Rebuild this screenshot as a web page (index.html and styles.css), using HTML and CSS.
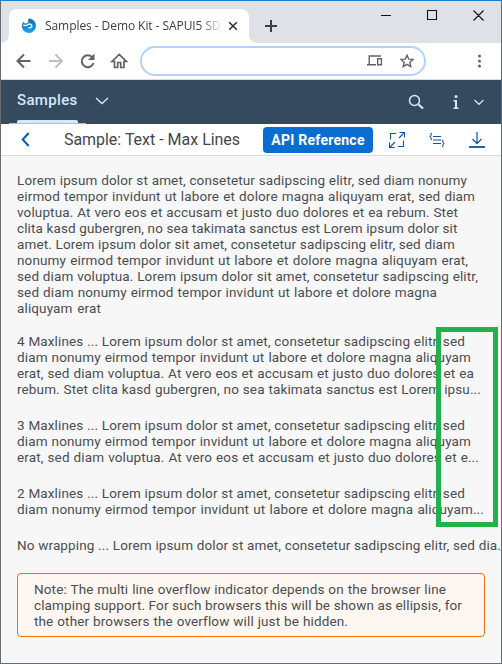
FILE: index.html
```html
<!DOCTYPE html>
<html lang="en">
<head>
<meta charset="utf-8">
<title>Samples - Demo Kit - SAPUI5 SDK</title>
<link rel="stylesheet" href="styles.css">
</head>
<body>
<div class="window">
  <div class="tabstrip">
    <div class="tab">
      <svg class="favicon" width="16" height="16" viewBox="0 0 16 16"><defs><linearGradient id="g" x2="0" y2="1"><stop stop-color="#0a6cb4"/><stop offset="1" stop-color="#1ca4ee"/></linearGradient></defs><path d="M8 .5C10 .7 12.500 1.700 14 4 16.300 8.500 14.300 13.200 10 14.700 5.500 16 1 12.800.9 8.500.8 6.500 1.500 4.700 3 3.500 2.900 4.500 3.500 5.500 4.800 5.500 6.300 5.300 7.500 4.500 7.300 3.300 7.100 2.300 6.900 1.200 8 .5Z" fill="url(#g)"/><path d="M2.300 7C4 8.300 5.500 7.500 7 6.500 8.800 5.500 10.800 6.200 10.800 8 10.600 9.800 8.800 10 7.500 9.500" fill="none" stroke="#e4f4ff" stroke-width="1.500"/></svg>
      <span class="tab-title">Samples - Demo Kit - SAPUI5 SD</span>
      <svg class="tab-close" width="10" height="10" viewBox="0 0 10 10"><path d="M1.200 1.200 8.800 8.800M8.800 1.200 1.200 8.800" stroke="#303438" stroke-width="1.600"/></svg>
    </div>
    <svg class="new-tab" width="12" height="12" viewBox="0 0 12 12"><path d="M6 0v12M0 6h12" stroke="#3c4043" stroke-width="2"/></svg>
    <svg class="controls" width="104" height="12" viewBox="0 0 104 12"><path d="M0 6.500h10M46.500 1.500h9v9h-9zM92.500 1.500l10 10M102.500 1.500l-10 10" fill="none" stroke="#111" stroke-width="1.100"/></svg>
  </div>
  <div class="toolbar">
    <svg class="nav" width="112" height="18" viewBox="0 0 112 18" fill="none" stroke="#5f6368" stroke-width="2"><path d="M14.500 9H2M8 2.500 1.500 9 8 15.500"/><path d="M33 9h12.500M39.500 2.500 46 9l-6.500 6.500" stroke="#bcbec1"/><path d="M76.500 5.500A6 6 0 1 0 77.500 11"/><path d="M78.500 1.500v6.500h-6.500z" fill="#5f6368" stroke="none"/><path d="M96 9.500h2.500V15.500h3.200v-5h3v5h3.200V9.500h2.500L103.200 2.500z" stroke-width="1.700"/></svg>
    <div class="address">
      <svg width="16" height="12" viewBox="0 0 16 12" fill="none" stroke="#5f6368" stroke-width="1.400"><path d="M14 1H2.200v8M0 9.700h9M10.700 3.700h3.700v6h-3.700z"/></svg>
      <svg width="14" height="14" viewBox="0 0 14 14" fill="none" stroke="#5f6368" stroke-width="1.400"><path d="m7 1.200 1.700 3.900 4.300.3-3.200 2.900 1 4.300L7 10.400l-3.800 2.200 1-4.300L1 5.400l4.300-.3z"/></svg>
    </div>
    <svg class="dots" width="4" height="14" viewBox="0 0 4 14" fill="#5f6368"><circle cx="2.500" cy="2" r="1.500"/><circle cx="2.500" cy="7" r="1.500"/><circle cx="2.500" cy="12" r="1.500"/></svg>
  </div>
  <header class="shell">
    <div class="shell-tab"><span class="shell-label">Samples</span>
      <svg width="14" height="8" viewBox="0 0 14 8"><path d="m1 1 6 5.500L13 1" fill="none" stroke="#d1e8ff" stroke-width="1.400"/></svg></div>
    <div class="shell-actions">
      <svg width="16" height="16" viewBox="0 0 16 16" fill="none" stroke="#d1e8ff"><circle cx="6.500" cy="6.500" r="5" stroke-width="1.500"/><path d="m10.500 10.500 4.500 4" stroke-width="2.200"/></svg>
      <svg class="info" width="6" height="14" viewBox="0 0 6 14" fill="#d1e8ff"><circle cx="3" cy="1.600" r="1.500"/><path d="M.5 5H4v7.500h1.500V14h-5v-1.500H2v-6H.5z"/></svg>
      <svg class="more" width="12" height="7" viewBox="0 0 12 7"><path d="m1.500 1 4.500 4.300L10.500 1" fill="none" stroke="#d1e8ff" stroke-width="1.200"/></svg>
    </div>
  </header>
  <div class="page-header">
    <svg width="9" height="15" viewBox="0 0 9 15"><path d="M7.700 1 1.700 7.500 7.700 14" fill="none" stroke="#0a5da8" stroke-width="2"/></svg>
    <h1>Sample: Text - Max Lines</h1>
    <button>API Reference</button>
    <svg class="full" width="16" height="16" viewBox="0 0 16 16" fill="none" stroke="#0854a0" stroke-width="1.100"><path d="M7 1.500H1.500v6M9 14.500h5.500v-6M10.500.5h5v5M.5 10.500v5h5M15.500.5 10 6M.5 15.500 6 10"/></svg>
    <svg class="code" width="16" height="14" viewBox="0 0 16 14" fill="none" stroke="#0854a0"><path d="M4 3.500h8M4 7h8M4 10.500h8" stroke-width="1.200"/><path d="M3 .5H2v2.300L.7 3.500l1.300.7v2.300h1M13 7.500h1v2.300l1.300.7-1.300.7v2.300h-1"/></svg>
    <svg class="down" width="16" height="16" viewBox="0 0 16 16" fill="none" stroke="#0854a0"><path d="M8 0v11.500M3.500 7 8 11.700 12.500 7" stroke-width="1.200"/><path d="M0 15h16" stroke-width="1.800"/></svg>
  </div>
  <main>
    <p class="text"><span class="line" style="width:450px">Lorem ipsum dolor st amet, consetetur sadipscing elitr, sed diam nonumy</span>
    <span class="line" style="width:458px">eirmod tempor invidunt ut labore et dolore magna aliquyam erat, sed diam</span>
    <span class="line" style="width:441px">voluptua. At vero eos et accusam et justo duo dolores et ea rebum. Stet</span>
    <span class="line" style="width:440px">clita kasd gubergren, no sea takimata sanctus est Lorem ipsum dolor sit</span>
    <span class="line" style="width:438px">amet. Lorem ipsum dolor sit amet, consetetur sadipscing elitr, sed diam</span>
    <span class="line" style="width:451px">nonumy eirmod tempor invidunt ut labore et dolore magna aliquyam erat,</span>
    <span class="line" style="width:461px">sed diam voluptua. Lorem ipsum dolor sit amet, consetetur sadipscing elitr,</span>
    <span class="line" style="width:420px">sed diam nonumy eirmod tempor invidunt ut labore et dolore magna</span>
    <span class="line" style="width:84px">aliquyam erat</span></p>
    <p class="text"><span class="line" style="width:448px">4 Maxlines ... Lorem ipsum dolor st amet, consetetur sadipscing elitr, sed</span>
    <span class="line" style="width:454px">diam nonumy eirmod tempor invidunt ut labore et dolore magna aliquyam</span>
    <span class="line" style="width:457px">erat, sed diam voluptua. At vero eos et accusam et justo duo dolores et ea</span>
    <span class="line" style="width:464px">rebum. Stet clita kasd gubergren, no sea takimata sanctus est Lorem ipsu...</span></p>
    <p class="text"><span class="line" style="width:448px">3 Maxlines ... Lorem ipsum dolor st amet, consetetur sadipscing elitr, sed</span>
    <span class="line" style="width:454px">diam nonumy eirmod tempor invidunt ut labore et dolore magna aliquyam</span>
    <span class="line" style="width:462px">erat, sed diam voluptua. At vero eos et accusam et justo duo dolores et e...</span></p>
    <p class="text"><span class="line" style="width:448px">2 Maxlines ... Lorem ipsum dolor st amet, consetetur sadipscing elitr, sed</span>
    <span class="line" style="width:467px">diam nonumy eirmod tempor invidunt ut labore et dolore magna aliquyam...</span></p>
    <p class="text"><span class="line" style="width:484px">No wrapping ... Lorem ipsum dolor st amet, consetetur sadipscing elitr, sed dia.</span></p>
    <div class="note"><span class="line" style="width:412px">Note: The multi line overflow indicator depends on the browser line</span>
    <span class="line" style="width:428px">clamping support. For such browsers this will be shown as ellipsis, for</span>
    <span class="line" style="width:314px">the other browsers the overflow will just be hidden.</span></div>
    <div class="highlight"></div>
  </main>
</div>
</body>
</html>
```
FILE: styles.css
```css
* { box-sizing: border-box; }
body { margin: 0; }
svg { display: block; flex: none; }
.window { width: 502px; height: 664px; border: 1px solid #696c70; border-top-color: #1b7fd2; overflow: hidden; background: #f7f7f7; font-family: Roboto, "Liberation Sans", sans-serif; display: flex; flex-direction: column; }
.tabstrip { height: 42px; flex: none; background: #dee1e6; display: flex; align-items: flex-start; }
.tab { position: relative; width: 240px; height: 34px; margin: 8px 0 0 8px; background: #fff; border-radius: 8px 8px 0 0; display: flex; align-items: center; padding-left: 12px; }
.tab::before, .tab::after { content: ""; position: absolute; bottom: 0; width: 8px; height: 8px; }
.tab::before { left: -8px; background: radial-gradient(circle at 0 0, transparent 7.5px, #fff 8px); }
.tab::after { right: -8px; background: radial-gradient(circle at 100% 0, transparent 7.5px, #fff 8px); }
.tab-title { margin-left: 8px; width: 176px; white-space: nowrap; font: 12px/16px "Open Sans", sans-serif; letter-spacing: -.07px; color: #3c4043; -webkit-mask-image: linear-gradient(90deg, #000 155px, transparent 178px); mask-image: linear-gradient(90deg, #000 155px, transparent 178px); }
.tab-close { margin-left: 7px; }
.new-tab { margin: 19px 0 0 16px; }
.controls { margin: 8px 0 0 104px; }
.toolbar { height: 37px; flex: none; background: #fff; border-bottom: 1px solid #dadce0; display: flex; align-items: center; }
.nav { margin-left: 15px; }
.address { width: 286px; height: 30px; margin-left: 12px; border: 2px solid #b4d2f7; border-radius: 15px; display: flex; align-items: center; justify-content: flex-end; gap: 17px; padding-right: 10px; }
.dots { margin-left: 51px; }
.shell { height: 44px; flex: none; background: #354a5f; display: flex; justify-content: space-between; }
.shell-tab { width: 77px; margin-left: 8px; padding: 0 8px; height: 44px; border-bottom: 1px solid #91c8f6; display: flex; align-items: center; }
.shell-tab svg { margin: -2px 0 0 17px; }
.shell-label { position: relative; width: 61px; flex: none; font-size: 15px; font-weight: 500; letter-spacing: .33px; line-height: 41px; height: 43px; color: #d1e8ff; }
.shell-label::after { content: ""; position: absolute; left: 0; right: 0; bottom: 0; height: 3px; background: #d1e8ff; border-radius: 2px 2px 0 0; }
.shell-actions { display: flex; align-items: center; padding-right: 16px; }
.info { margin-left: 29px; }
.more { margin-left: 14px; }
.page-header { height: 32px; flex: none; background: #fff; border-bottom: 1px solid #d9d9d9; display: flex; align-items: center; padding-left: 20px; }
h1 { margin: 0 0 0 34px; width: 199px; font-size: 16px; font-weight: 400; line-height: 20px; color: #42464a; white-space: nowrap; text-align-last: justify; padding-right: 23px; letter-spacing: -.05px; }
button { width: 110px; height: 26px; flex: none; border: 0; border-radius: 4px; padding: 0; background: #0a6ed1; color: #fff; font: 700 14px/26px Roboto, sans-serif; letter-spacing: .25px; }
.full { margin-left: 16px; }
.code { margin-left: 24px; }
.down { margin-left: 24px; }
main { position: relative; flex: 1; padding: 16px 16px 0; font-size: 13.5px; line-height: 16px; letter-spacing: .13px; color: #4a4e52; }
.text { margin: 0 0 17px; }
.text + .text { margin-bottom: 20px; }
.line { display: block; white-space: nowrap; text-align-last: justify; }
.note { width: 468px; height: 64px; border: 1px solid #e9730c; border-radius: 4px; background: #fef7f1; padding: 7px 16px; }
.highlight { position: absolute; left: 435px; top: 171px; width: 62px; height: 200px; border: 5px solid #22b14c; }
```
